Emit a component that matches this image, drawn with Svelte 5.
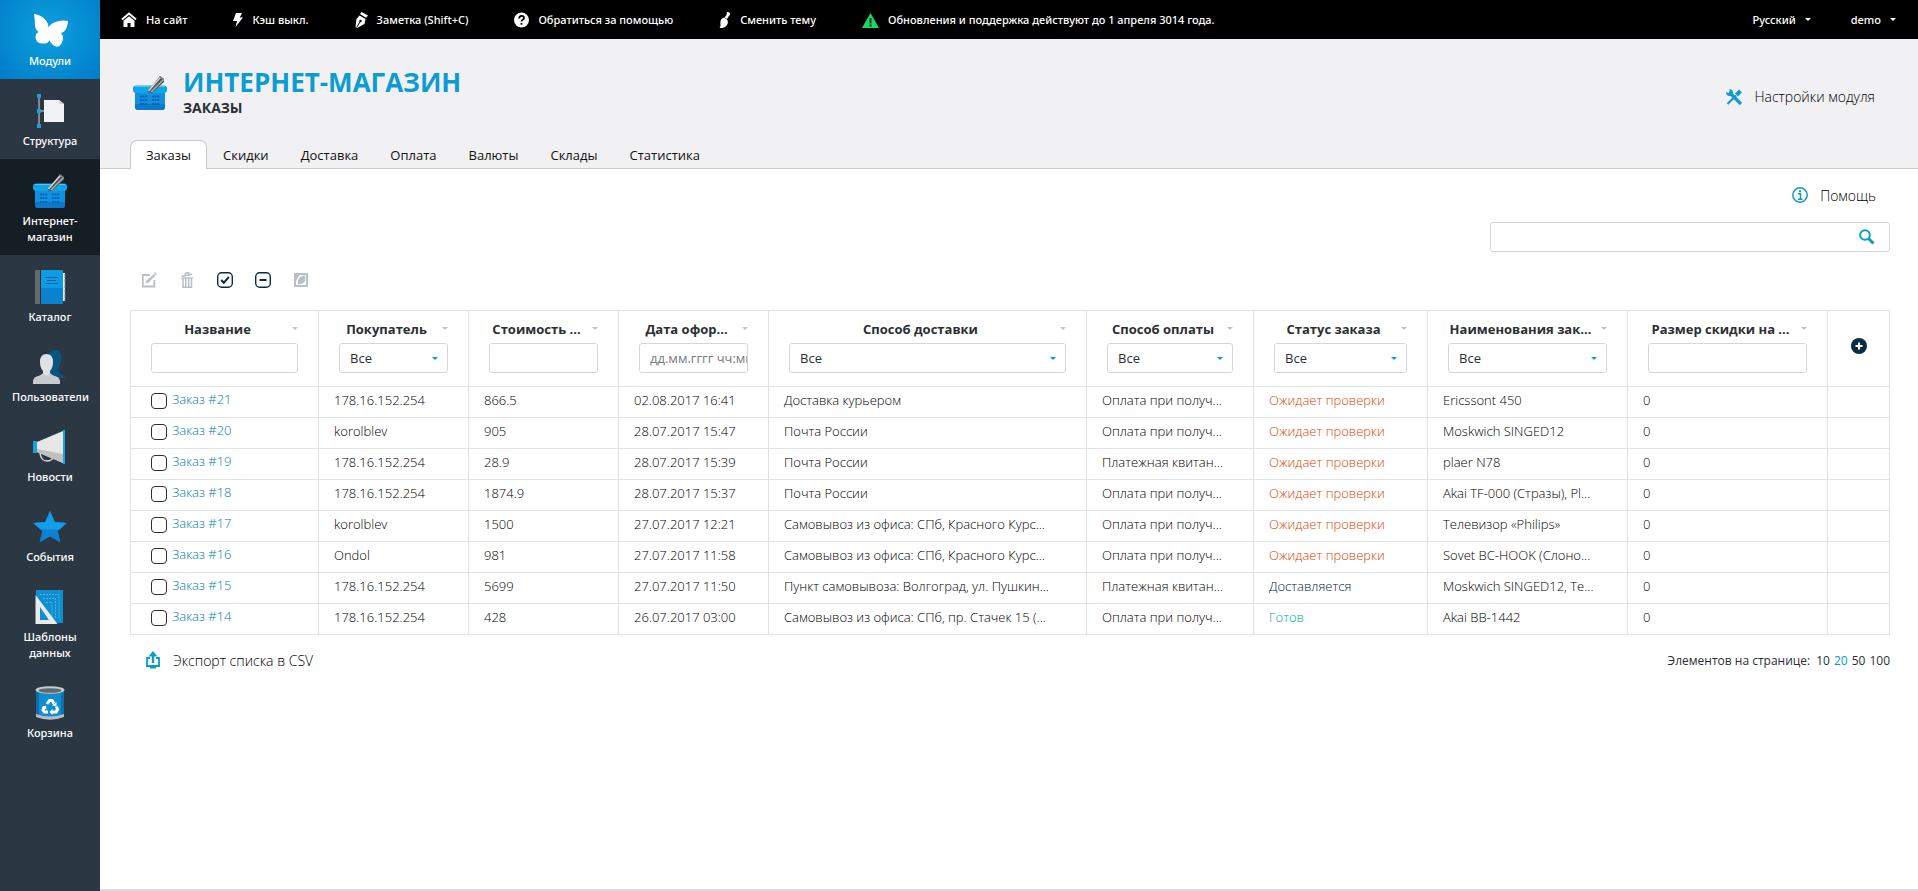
<script lang="ts">
    let search = $state("");
    let perPage = $state(20);

    const topLinks = [
        { icon: "home", w: 16, text: "На сайт" },
        { icon: "bolt", w: 10, text: "Кэш выкл." },
        { icon: "pen", w: 13, text: "Заметка (Shift+C)" },
        { icon: "help", w: 15, text: "Обратиться за помощью" },
        { icon: "brush", w: 12, text: "Сменить тему" },
        { icon: "warn", w: 17, text: "Обновления и поддержка действуют до 1 апреля 3014 года." }
    ];

    const modules = [
        { icon: "butterfly", text: "Модули", cls: "main" },
        { icon: "tree", text: "Структура", cls: "" },
        { icon: "basket", text: "Интернет-магазин", cls: "active" },
        { icon: "book", text: "Каталог", cls: "" },
        { icon: "users", text: "Пользователи", cls: "" },
        { icon: "horn", text: "Новости", cls: "" },
        { icon: "star", text: "События", cls: "" },
        { icon: "ruler", text: "Шаблоны данных", cls: "" },
        { icon: "bin", text: "Корзина", cls: "" }
    ];

    const tabs = ["Заказы", "Скидки", "Доставка", "Оплата", "Валюты", "Склады", "Статистика"];

    const columns = [
        { key: "name", text: "Название", filter: "text" },
        { key: "buyer", text: "Покупатель", filter: "select" },
        { key: "price", text: "Стоимость ...", filter: "text" },
        { key: "date", text: "Дата офор...", filter: "date" },
        { key: "delivery", text: "Способ доставки", filter: "select" },
        { key: "payment", text: "Способ оплаты", filter: "select" },
        { key: "status", text: "Статус заказа", filter: "select" },
        { key: "items", text: "Наименования зак...", filter: "select" },
        { key: "discount", text: "Размер скидки на ...", filter: "text" }
    ];

    const office = "Самовывоз из офиса: СПб, Красного Курс...";
    const cash = "Оплата при получ...";
    const bill = "Платежная квитан...";
    const wait = "Ожидает проверки";

    const orders = [
        { id: 21, cells: ["178.16.152.254", "866.5", "02.08.2017 16:41", "Доставка курьером", cash], status: wait, items: "Ericssont 450" },
        { id: 20, cells: ["korolblev", "905", "28.07.2017 15:47", "Почта России", cash], status: wait, items: "Moskwich SINGED12" },
        { id: 19, cells: ["178.16.152.254", "28.9", "28.07.2017 15:39", "Почта России", bill], status: wait, items: "plaer N78" },
        { id: 18, cells: ["178.16.152.254", "1874.9", "28.07.2017 15:37", "Почта России", cash], status: wait, items: "Akai TF-000 (Стразы), Pl..." },
        { id: 17, cells: ["korolblev", "1500", "27.07.2017 12:21", office, cash], status: wait, items: "Телевизор «Philips»" },
        { id: 16, cells: ["Ondol", "981", "27.07.2017 11:58", office, cash], status: wait, items: "Sovet BC-HOOK (Слоно..." },
        { id: 15, cells: ["178.16.152.254", "5699", "27.07.2017 11:50", "Пункт самовывоза: Волгоград, ул. Пушкин...", bill], status: "Доставляется", items: "Moskwich SINGED12, Te..." },
        { id: 14, cells: ["178.16.152.254", "428", "26.07.2017 03:00", "Самовывоз из офиса: СПб, пр. Стачек 15 (...", cash], status: "Готов", items: "Akai BB-1442" }
    ];

    const statusClass: Record<string, string> = {
        "Ожидает проверки": "waiting",
        "Доставляется": "sent",
        "Готов": "done"
    };
</script>

{#snippet basket()}
    <svg viewBox="0 0 34 34" width="34" height="34" aria-hidden="true">
        <path d="M2 14h30v17q-.2 3-3 3H5q-2.800 0-3-3z" fill="#1090e0" />
        <path d="M2 28h30v3q-.2 3-3 3H5q-2.800 0-3-3z" fill="#0b78ca" />
        <path d="M7 20.500h8M19 20.500h8M7 24h8M19 24h8M7 28h8M19 28h8" fill="none" stroke="#0862b4" stroke-width="2" stroke-dasharray="1.800 .8" />
        <rect x="0" y="9.500" width="34" height="7.500" rx="3" fill="#13a4e6" />
        <path d="M2 10.500h30" stroke="#4cc6f7" />
        <path d="M14.500 15.500L27 0l4 3v3L18.500 17q-2 0-4-1.500z" fill="#4d4f52" />
        <path d="M15.500 15L27.500 1.200" stroke="#d8d9da" stroke-width="1.400" />
        <path d="M18 16L30.500 3.500" stroke="#aeb0b2" stroke-width="1.400" />
        <path d="M26.500.8l4 3" stroke="#85888b" stroke-width="1.400" />
    </svg>
{/snippet}

{#snippet moduleIcon(name: string)}
    {#if name === "basket"}
        {@render basket()}
    {:else}
        <svg viewBox="0 0 34 34" width="34" height="34" aria-hidden="true">
            {#if name === "butterfly"}
                <path d="M1 0q8 1 12 6.500q2.500 3 2.500 7Q18 9 24 7.500q6-1.500 11-.5q-.5 7-3.500 10q-1.500 1.500-3.500 2q2.500 2.500 2 6q-.5 4-3.500 7q-3 1.500-6-.5q-2.500-2-4-5q-1.500 2.500-4.500 3Q7 30 4.500 28q-2.500-3-2-6q.5-3 3-4Q2.500 16 2 11.500Q2 5 1 0z" fill="#fff" />
            {:else if name === "tree"}
                <path d="M6 2v30M6 17h6" stroke="#9aa4ad" stroke-width="1.500" />
                <path d="M4 0h4v4H4zM4 15h4v4H4zM4 30h4v4H4z" fill="#10a4e2" />
                <path d="M11 6h15l5 4v18H11z" fill="#f2f1f5" />
                <path d="M26 6l5 4h-5z" fill="#d4d3da" />
            {:else if name === "book"}
                <path d="M27 3h5v28h-5z" fill="#e8ebed" />
                <path d="M32 4v27" stroke="#777e84" stroke-dasharray="4 1" />
                <rect x="2" y="0" width="28" height="34" rx="1" fill="#0d9be4" />
                <path d="M8 18h22v16H8z" fill="#0a83cf" />
                <path d="M2 0h5v34H2z" fill="#676a6b" />
                <path d="M7.500 0v34" stroke="#2a3036" />
                <path d="M12 7.500h13M12 13.500h13M14 10.500h9" stroke="#0b5fa5" />
            {:else if name === "users"}
                <path d="M15 7q1-7 7-7 6.500 0 6.500 8 0 6-3 9v4q1 3 8 7H14z" fill="#075580" />
                <path d="M7 12q0-8 6.500-8T20 12q0 6-3 9v2q1 2 7 4q3 1 3 7H0q0-6 3-7q6-2 7-4v-2q-3-3-3-9z" fill="#e0e1e2" />
                <path d="M0 34q0-6 3-7q6-2 7-3q4 3 7 0q1 1 7 3q3 1 3 7z" fill="#c8cacc" />
            {:else if name === "horn"}
                <path d="M7 23q1 8 7 8q5 0 7-5" fill="none" stroke="#d5d7d8" stroke-width="1.500" />
                <path d="M4 12L30 1v32L4 22z" fill="#e7e7e7" />
                <path d="M4 19L30 24v9L4 22z" fill="#bfc0c1" />
                <path d="M0 11h4v12H0z" fill="#18a2e0" />
                <path d="M31 0v34" stroke="#18a2e0" stroke-width="2" />
            {:else if name === "star"}
                <path d="M17 1l4.800 11 11.700 1-8.700 8 2.700 11.500L17 26.500 6.500 32.500 9.200 21 .5 13l11.700-1z" fill="#0b82d3" />
                <path d="M17 1l4.800 11 11.700 1-7 6.500h-19L.5 13l11.700-1z" fill="#129ce9" />
            {:else if name === "ruler"}
                <path d="M3 0h27v33H3z" fill="#108fd0" />
                <path d="M7 4.500h19v24M10 8.500h12.500v20M13 12.500h6v16" fill="none" stroke="#4fb3e4" stroke-dasharray="2 1" />
                <path d="M2.500 5v29h22zM7 17l9 13H7z" fill="#e9eaec" fill-rule="evenodd" />
            {:else if name === "bin"}
                <path d="M3 4h28v26q-14 6-28 0z" fill="#0f8dce" />
                <path d="M3 4h3v26l-3-1zM28 4h3v25l-3 1z" fill="#0b6fae" />
                <path d="M3 28q14 5 28 0v3q-14 5.500-28 0z" fill="#b9bdc0" />
                <ellipse cx="17" cy="4" rx="14.500" ry="3.800" fill="#c9cccd" />
                <ellipse cx="17" cy="4.500" rx="11.500" ry="2.300" fill="#62676b" />
                <g fill="none" stroke="#fff" stroke-width="3">
                    <path d="M14 18l2.500-3.500H19l2 3M23.500 20.500l1 3-1.500 2.500h-4M15 26h-3.500l-1.500-2 1.500-3.500" />
                </g>
                <path d="M19 19.500l4.500 1V16zM19.500 23v6l-3-3zM8.500 21l4.500-1.500.5 4z" fill="#fff" />
            {/if}
        </svg>
    {/if}
{/snippet}

<div class="page">
    <nav class="sidebar">
        {#each modules as m}
            <a class="module {m.cls}" href="#{m.icon}">
                {@render moduleIcon(m.icon)}
                <span>{m.text}</span>
            </a>
        {/each}
    </nav>

    <div class="content">
        <div class="topbar">
            {#each topLinks as link}
                <a href="#{link.icon}">
                    <svg viewBox="0 0 {link.w} 16" width={link.w} height="16" aria-hidden="true">
                        {#if link.icon === "home"}
                            <path d="M1 7.500L8 1.500l7 6" fill="none" stroke="#fff" stroke-width="2" />
                            <path d="M2.500 8.800L8 4.200l5.500 4.600V15H9.500v-4h-3v4h-4z" fill="#fff" />
                        {:else if link.icon === "bolt"}
                            <path d="M3 1h6L6.800 5.500H10L2.500 15l1.500-6H0z" fill="#fff" />
                        {:else if link.icon === "pen"}
                            <path d="M6.500 0L13 3.500l-2 2.200L5 2z" fill="#fff" />
                            <path d="M4.500 3.500l6 3.500-1 5L2 16l-1.500-.8L1.500 7z" fill="#fff" />
                            <circle cx="5.500" cy="9" r="1.200" fill="#000" />
                            <path d="M5.300 9.500L1.500 15.500" stroke="#000" />
                        {:else if link.icon === "help"}
                            <circle cx="7.500" cy="8" r="7.500" fill="#fff" />
                            <path d="M5.200 6.500q0-2.600 2.400-2.600t2.400 2q0 1.200-1.300 1.900-1.200.6-1.200 1.700M7.500 11v1.700" fill="none" stroke="#000" stroke-width="1.800" />
                        {:else if link.icon === "brush"}
                            <path d="M8 0q3-.5 3 2 0 1.500-1.500 2.500L8 7 5.500 5.500 7.500 3z" fill="#fff" />
                            <path d="M5 5.500l3.500 2.500q1 3-.5 5-1.500 2.500-4.500 3-2 .2-3-.5 1.500-1 1-3Q.500 7 5 5.500z" fill="#fff" />
                        {:else}
                            <path d="M8.500 1L17 16H0z" fill="#1ed760" />
                            <path d="M8.500 6v5.500M8.500 12.500v2" stroke="#06401c" stroke-width="2" />
                        {/if}
                    </svg>
                    <span>{link.text}</span>
                </a>
            {/each}
            <div class="account">
                <button>Русский <i class="caret"></i></button>
                <button>demo <i class="caret"></i></button>
            </div>
        </div>

        <header>
            <div class="heading">
                <div class="title">
                    {@render basket()}
                    <div>
                        <h1>ИНТЕРНЕТ-МАГАЗИН</h1>
                        <h2>ЗАКАЗЫ</h2>
                    </div>
                </div>
                <a class="action" href="#settings">
                    <svg viewBox="0 0 16 16" width="16" height="16" aria-hidden="true">
                        <path d="M1.500 15L10 6.500" stroke="#0c9cd2" stroke-width="2.200" />
                        <path d="M10.500 6L14.500 2" stroke="#0c9cd2" stroke-width="4" />
                        <path d="M4.500 4.500L15 15" stroke="#0c9cd2" stroke-width="3.200" />
                        <path d="M0 3q0 4 4 4 3 0 3-3 0-3.500-3.500-4v2.800L2.300 4z" fill="#0c9cd2" />
                    </svg>
                    Настройки модуля
                </a>
            </div>
            <div class="tabs">
                {#each tabs as tab, i}
                    <a class="tab" class:current={i === 0} href="#tab{i}">{tab}</a>
                {/each}
            </div>
        </header>

        <main>
            <div class="tools">
                <a class="action" href="#help">
                    <svg viewBox="0 0 16 16" width="16" height="16" aria-hidden="true">
                        <circle cx="8" cy="8" r="7.200" fill="none" stroke="#0c9cc4" stroke-width="1.500" />
                        <path d="M6 6.800h2.500v5M6 12.200h4.500" fill="none" stroke="#0c9cc4" stroke-width="1.500" />
                        <path d="M7 3.200h2v2H7z" fill="#0c9cc4" />
                    </svg>
                    Помощь
                </a>
                <div class="search">
                    <input type="text" aria-label="Поиск" bind:value={search} />
                    <button aria-label="Найти">
                        <svg viewBox="0 0 16 16" width="16" height="16" aria-hidden="true">
                            <circle cx="6" cy="6" r="4.800" fill="none" stroke="#0c9cc4" stroke-width="2" />
                            <path d="M9.500 9.500l5 5" stroke="#0c9cc4" stroke-width="3" />
                        </svg>
                    </button>
                </div>
            </div>

            <div class="toolbar">
                <button aria-label="Редактировать">
                    <svg viewBox="0 0 16 16" width="16" height="16" aria-hidden="true">
                        <path d="M9 3H1.800v11.500h11.500V8" fill="none" stroke="#b9c0c4" stroke-width="1.800" />
                        <path d="M4.500 11.500l1-3L13 2l1.500 1.500L7.500 10.500z" fill="#b9c0c4" />
                        <path d="M14 0l2 2-1 1-2-2z" fill="#b9c0c4" />
                    </svg>
                </button>
                <button aria-label="Удалить">
                    <svg viewBox="0 0 16 16" width="16" height="16" aria-hidden="true">
                        <path d="M2.500 4.500L13 2.200M6 3l.5-1.700 3-.6.8 1.300" fill="none" stroke="#b9c0c4" stroke-width="1.500" />
                        <path d="M2.500 6h11.500" stroke="#b9c0c4" stroke-width="1.500" />
                        <path d="M4 6v9.200h8.500V6M6.800 6v9M9.700 6v9" fill="none" stroke="#b9c0c4" stroke-width="1.500" />
                    </svg>
                </button>
                <button aria-label="Выделить все">
                    <svg viewBox="0 0 16 16" width="16" height="16" aria-hidden="true">
                        <rect x=".7" y=".7" width="14.600" height="14.600" rx="4" fill="none" stroke="#0b2c3d" stroke-width="1.400" />
                        <path d="M4.200 8l2.600 2.800L11.800 5" fill="none" stroke="#0b2c3d" stroke-width="2" />
                    </svg>
                </button>
                <button aria-label="Снять выделение">
                    <svg viewBox="0 0 16 16" width="16" height="16" aria-hidden="true">
                        <rect x=".7" y=".7" width="14.600" height="14.600" rx="4" fill="none" stroke="#0b2c3d" stroke-width="1.400" />
                        <path d="M4.500 8h7" stroke="#0b2c3d" stroke-width="2" />
                    </svg>
                </button>
                <button aria-label="Инвертировать выделение">
                    <svg viewBox="0 0 16 16" width="16" height="16" aria-hidden="true">
                        <path d="M1 1h14v14H1zM3 3v10h10V3z" fill="#b9c0c4" fill-rule="evenodd" />
                        <path d="M3 3h3.500L3 9zM12 3.500q1.500 6-2.500 8-3 1-4.500 1-1-2.500.5-5.500Q7.500 3.500 12 3.500z" fill="#b9c0c4" />
                    </svg>
                </button>
            </div>

            <table>
                <colgroup>
                    {#each columns as col}
                        <col class={col.key} />
                    {/each}
                    <col class="more" />
                </colgroup>
                <thead>
                    <tr>
                        {#each columns as col}
                            <th>
                                <div class="head">
                                    <span>{col.text}</span>
                                    <i class="caret"></i>
                                </div>
                                {#if col.filter === "select"}
                                    <div class="select">
                                        <select aria-label={col.text}>
                                            <option>Все</option>
                                        </select>
                                        <i class="caret"></i>
                                    </div>
                                {:else}
                                    <input class="filter" type="text" aria-label={col.text} placeholder={col.filter === "date" ? "дд.мм.гггг чч:мм" : ""} />
                                {/if}
                            </th>
                        {/each}
                        <th class="add">
                            <button aria-label="Добавить колонку">
                                <svg viewBox="0 0 16 16" width="16" height="16" aria-hidden="true">
                                    <circle cx="8" cy="8" r="8" fill="#0b2c3d" />
                                    <path d="M8 4.500v7M4.500 8h7" stroke="#fff" stroke-width="2" />
                                </svg>
                            </button>
                        </th>
                    </tr>
                </thead>
                <tbody>
                    {#each orders as order}
                        <tr>
                            <td>
                                <div class="order">
                                    <input type="checkbox" aria-label="Заказ #{order.id}" />
                                    <a href="#order{order.id}">Заказ #{order.id}</a>
                                </div>
                            </td>
                            {#each order.cells as cell}
                                <td>{cell}</td>
                            {/each}
                            <td class={statusClass[order.status]}>{order.status}</td>
                            <td>{order.items}</td>
                            <td>0</td>
                            <td></td>
                        </tr>
                    {/each}
                </tbody>
            </table>

            <div class="bottom">
                <a class="action" href="#csv">
                    <svg viewBox="0 0 16 18" width="16" height="18" aria-hidden="true">
                        <path d="M5 7H2v8h12V7h-3" fill="none" stroke="#0c9cc4" stroke-width="1.800" />
                        <path d="M8 12V4" stroke="#0c9cc4" stroke-width="2.400" />
                        <path d="M8 0l4.500 5.500h-9zM1 14h14v2h-4v1.500H5V16H1z" fill="#0c9cc4" />
                    </svg>
                    Экспорт списка в CSV
                </a>
                <div class="pages">
                    <span>Элементов на странице:</span>
                    {#each [10, 20, 50, 100] as n}
                        <button class:chosen={n === perPage} onclick={() => (perPage = n)}>{n}</button>
                    {/each}
                </div>
            </div>
        </main>
    </div>
</div>

<style>
    :global(body) {
        margin: 0;
        font-family: "Open Sans", "Noto Sans", sans-serif;
        font-size: 13px;
        color: #2b2f33;
    }

    a {
        color: inherit;
        text-decoration: none;
    }

    button {
        padding: 0;
        border: 0;
        background: none;
        font: inherit;
        color: inherit;
        cursor: pointer;
    }

    svg {
        display: block;
        flex: none;
        overflow: visible;
    }

    .page {
        display: flex;
        min-height: 100vh;
    }

    .sidebar {
        flex: none;
        width: 100px;
        background: #2c3744;
    }

    .module {
        display: flex;
        flex-direction: column;
        align-items: center;
        gap: 5px;
        padding: 15px 5px 10px;
        font-family: "Noto Sans", sans-serif;
        font-size: 11px;
        font-weight: 500;
        line-height: 16px;
        color: #fff;
        text-align: center;
    }

    .module span {
        max-width: 76px;
    }

    .module.main {
        padding-top: 14px;
        background: radial-gradient(circle at 50% 40%, #0da0e0, #007cc6);
    }

    .module.active {
        background: #151d25;
    }

    .content {
        flex: 1;
        display: flex;
        flex-direction: column;
        min-width: 0;
    }

    .topbar {
        display: flex;
        align-items: center;
        gap: 46px;
        height: 39px;
        padding: 0 22px 0 21px;
        background: #000;
        font-family: "Noto Sans", sans-serif;
        font-size: 11px;
        font-weight: 500;
        color: #fff;
        white-space: nowrap;
    }

    .topbar a {
        display: flex;
        align-items: center;
        gap: 9px;
    }

    .account {
        display: flex;
        gap: 40px;
        margin-left: auto;
    }

    .account button {
        display: flex;
        align-items: center;
        gap: 9px;
    }

    .caret {
        flex: none;
        border: 3px solid transparent;
        border-top-color: currentColor;
        border-bottom-width: 0;
    }

    header {
        padding: 0 30px;
        background: #f1f1f3;
        border-bottom: 1px solid #c8c8ce;
    }

    .heading {
        display: flex;
        justify-content: space-between;
        align-items: center;
        height: 101px;
        padding: 0 13px 0 3px;
    }

    .heading .action {
        margin-bottom: -14px;
    }

    .title {
        display: flex;
        align-items: center;
        gap: 16px;
        margin-top: 6px;
    }

    h1,
    h2 {
        margin: 0;
        font-weight: 700;
    }

    h1 {
        font-size: 26px;
        line-height: 30px;
        color: #0c9cd2;
    }

    h2 {
        font-size: 14px;
        line-height: 22px;
    }

    .action {
        display: flex;
        align-items: center;
        gap: 12px;
        font-size: 14px;
        font-weight: 300;
        color: #000;
    }

    .tabs {
        display: flex;
    }

    .tab {
        padding: 0 15px;
        line-height: 28px;
        border: 1px solid transparent;
        border-bottom: 0;
        margin-bottom: -1px;
        color: #111;
    }

    .tab.current {
        background: #fff;
        border-color: #c8c8ce;
        border-radius: 7px 7px 0 0;
    }

    main {
        flex: 1;
        padding: 15px 28px 0 30px;
        border-bottom: 2px solid #dcdce0;
    }

    .tools {
        display: flex;
        flex-direction: column;
        align-items: flex-end;
        gap: 16px;
    }

    .tools .action {
        height: 22px;
        padding-right: 14px;
    }

    .search {
        box-sizing: border-box;
        display: flex;
        width: 400px;
        height: 30px;
        padding-right: 14px;
        border: 1px solid #d5d6d8;
        border-radius: 3px;
    }

    .search input {
        flex: 1;
        border: 0;
        background: none;
        padding: 0 10px;
        font: inherit;
    }

    .toolbar {
        display: flex;
        gap: 22px;
        padding: 20px 0 22px 11px;
    }

    table {
        width: 100%;
        table-layout: fixed;
        border-collapse: collapse;
    }

    th,
    td {
        box-sizing: border-box;
        border: 1px solid #e1e2e4;
    }

    th {
        height: 76px;
        padding: 0 20px 6px;
        vertical-align: middle;
    }

    td {
        height: 31px;
        padding: 0 15px 4px;
        font-weight: 300;
        color: #000;
        white-space: nowrap;
        overflow: hidden;
        text-overflow: ellipsis;
    }

    col.name { width: 188px; }
    col.buyer, col.price, col.date { width: 150px; }
    col.payment { width: 167px; }
    col.status { width: 174px; }
    col.items, col.discount { width: 200px; }
    col.more { width: 62px; }

    .head {
        display: flex;
        align-items: center;
        height: 20px;
        margin-bottom: 4px;
    }

    .head span {
        flex: 1;
        white-space: nowrap;
    }

    .head .caret {
        margin-left: 8px;
        color: #c0c3c6;
    }

    .filter,
    select {
        box-sizing: border-box;
        display: block;
        width: 100%;
        height: 30px;
        padding: 0 0 0 10px;
        border: 1px solid #d5d6d8;
        border-radius: 3px;
        background: #fff;
        font: inherit;
        font-weight: 400;
        color: #2b2f33;
    }

    .filter::placeholder {
        color: #777b7e;
    }

    .select {
        position: relative;
    }

    select {
        appearance: none;
    }

    .select .caret {
        position: absolute;
        right: 10px;
        top: 14px;
        color: #0c9cc4;
        pointer-events: none;
    }

    .add {
        text-align: center;
    }

    .add button {
        display: block;
        margin: 0 auto;
    }

    .order {
        display: flex;
        align-items: center;
        gap: 5px;
        padding: 2px 0 0 5px;
    }

    .order input {
        appearance: none;
        box-sizing: border-box;
        width: 16px;
        height: 16px;
        margin: 0;
        border: 1px solid #2b2f33;
        border-radius: 4px;
    }

    .order a {
        padding-bottom: 4px;
        color: #007ea6;
    }

    td.waiting { color: #d94400; }
    td.sent { color: #001a40; }
    td.done { color: #00ab92; }

    .bottom {
        display: flex;
        justify-content: space-between;
        align-items: center;
        height: 50px;
        padding-left: 15px;
    }

    .pages {
        display: flex;
        gap: 4px;
        font-size: 12px;
    }

    .pages span {
        margin-right: 2px;
    }

    .pages .chosen {
        color: #0c9cc4;
    }
</style>
